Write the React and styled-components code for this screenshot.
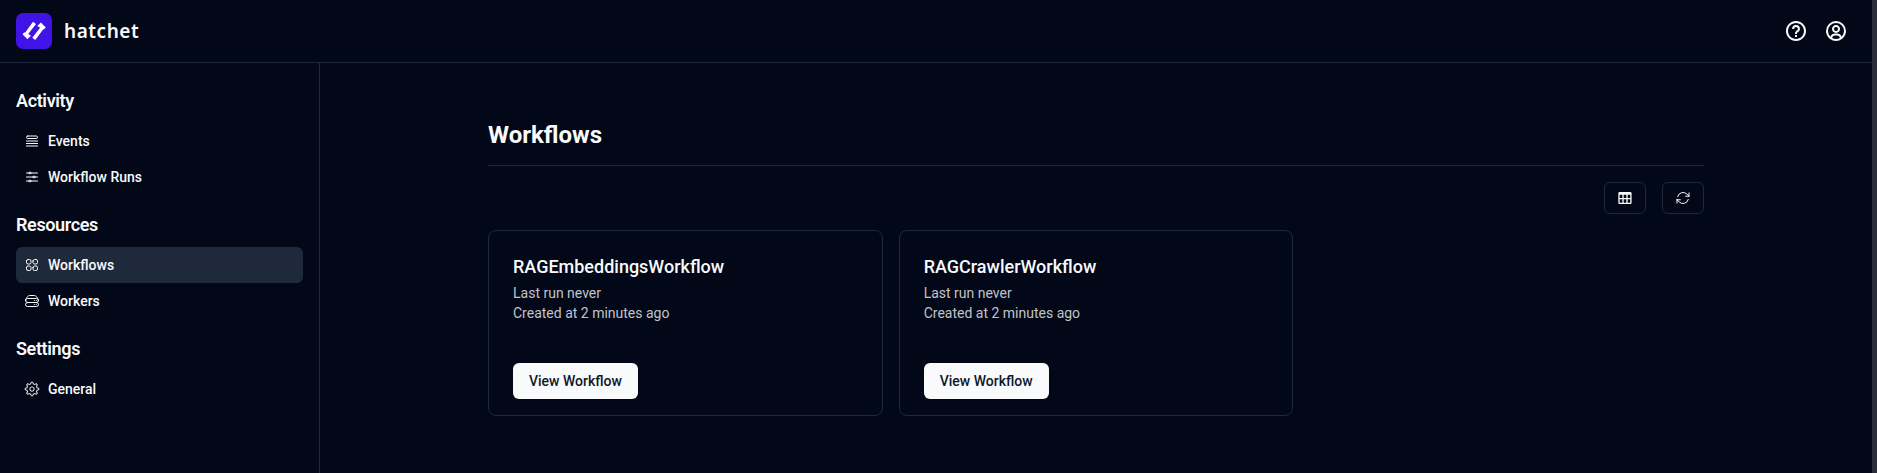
import React from "react";
import styled, { createGlobalStyle } from "styled-components";
import { BiHelpCircle, BiUserCircle, BiTable } from "react-icons/bi";
import {
  HiOutlineQueueList,
  HiOutlineAdjustmentsHorizontal,
  HiOutlineSquares2X2,
  HiOutlineServerStack,
  HiOutlineArrowPath,
} from "react-icons/hi2";
import { RxGear } from "react-icons/rx";

const GlobalStyle = createGlobalStyle`
  *, *::before, *::after { box-sizing: border-box; }
  body {
    margin: 0;
    background: #020817;
    color: #f8fafc;
    font-family: Roboto, "Liberation Sans", sans-serif;
    overflow: hidden;
  }
  h1, h2, h3, p { margin: 0; }
`;

const Shell = styled.div`
  display: flex;
  height: 100vh;
`;

const Page = styled.div`
  flex: 1;
  display: flex;
  flex-direction: column;
`;

const ScrollTrack = styled.div`
  width: 5px;
  background: #2c2d39;
`;

const Header = styled.header`
  display: flex;
  align-items: center;
  justify-content: space-between;
  height: 63px;
  padding: 0 24px 0 16px;
  border-bottom: 1px solid #1e293b;
`;

const Brand = styled.div`
  display: flex;
  align-items: center;
  gap: 12px;
`;

const Wordmark = styled.span`
  font: 650 19px/28px "Noto Sans", sans-serif;
  letter-spacing: 0.55px;
`;

const HeaderActions = styled.div`
  display: flex;
  gap: 16px;
  align-items: center;
`;

const HeaderButton = styled.button`
  display: flex;
  padding: 0;
  width: 24px;
  height: 24px;
  border: 0;
  background: none;
  color: inherit;
`;

const Body = styled.div`
  flex: 1;
  display: flex;
`;

const Sidebar = styled.aside`
  width: 320px;
  padding: 24px 16px;
  border-right: 1px solid #1e293b;
  display: flex;
  flex-direction: column;
  gap: 16px;
`;

const SectionTitle = styled.h2`
  font-size: 18px;
  line-height: 28px;
  font-weight: 600;
  letter-spacing: -0.37px;
  margin-bottom: 8px;
`;

const NavItem = styled.a`
  display: flex;
  align-items: center;
  gap: 8px;
  height: 36px;
  padding: 0 8px;
  border-radius: 6px;
  font-size: 14px;
  line-height: 20px;
  font-weight: 500;
  background: ${(p) => (p.$active ? "#1e293b" : "transparent")};
`;

const Main = styled.main`
  flex: 1;
  padding: 56px 136px 0 168px;
`;

const Content = styled.div`
  width: 1216px;
`;

const Title = styled.h1`
  font-size: 24px;
  line-height: 32px;
  font-weight: 700;
`;

const Divider = styled.div`
  height: 1px;
  background: #1e293b;
  margin: 14px 0 16px;
`;

const Toolbar = styled.div`
  display: flex;
  justify-content: flex-end;
  gap: 16px;
  margin-bottom: 16px;
`;

const ToolButton = styled.button`
  display: flex;
  align-items: center;
  justify-content: center;
  width: 42px;
  height: 32px;
  padding: 0;
  border: 1px solid #1e293b;
  border-radius: 6px;
  background: none;
  color: inherit;
`;

const CardGrid = styled.div`
  display: grid;
  grid-template-columns: repeat(3, 1fr);
  gap: 16px;
`;

const Card = styled.article`
  height: 186px;
  padding: 24px;
  border: 1px solid #1e293b;
  border-radius: 8px;
  display: flex;
  flex-direction: column;
  align-items: flex-start;
`;

const CardTitle = styled.h3`
  font-size: 18px;
  line-height: 24px;
  font-weight: 500;
  margin-bottom: 4px;
`;

const CardText = styled.p`
  font-size: 14px;
  line-height: 20px;
  color: #c0c3cb;
`;

const PrimaryButton = styled.button`
  height: 36px;
  margin-top: 40px;
  padding: 0 16px;
  border: 0;
  border-radius: 6px;
  background: #f8fafc;
  color: #0f172a;
  font: 500 14px/20px Roboto, sans-serif;
  flex: none;
`;

const Logo = () => (
  <svg width="36" height="36" viewBox="0 0 36 36">
    <rect width="36" height="36" rx="7" fill="#4013e6" />
    <g fill="#fff">
      <path d="M17 8.8 20 11.1 12.2 21.1 15 22.7 11.4 26.3 6.5 21.3 8.2 19.6 9.2 19.4Z" />
      <path d="M19.3 27 16.3 24.7 24.1 14.7 21.3 13.1 24.9 9.5 29.8 14.5 28.1 16.2 27.1 16.4Z" />
    </g>
  </svg>
);

const sections = [
  {
    title: "Activity",
    items: [
      { label: "Events", icon: HiOutlineQueueList },
      { label: "Workflow Runs", icon: HiOutlineAdjustmentsHorizontal },
    ],
  },
  {
    title: "Resources",
    items: [
      { label: "Workflows", icon: HiOutlineSquares2X2, active: true },
      { label: "Workers", icon: HiOutlineServerStack },
    ],
  },
  { title: "Settings", items: [{ label: "General", icon: RxGear }] },
];

const workflows = ["RAGEmbeddingsWorkflow", "RAGCrawlerWorkflow"];

export default function App() {
  return (
    <Shell>
      <GlobalStyle />
      <Page>
        <Header>
          <Brand>
            <Logo />
            <Wordmark>hatchet</Wordmark>
          </Brand>
          <HeaderActions>
            <HeaderButton aria-label="Help"><BiHelpCircle size={24} /></HeaderButton>
            <HeaderButton aria-label="Account"><BiUserCircle size={24} /></HeaderButton>
          </HeaderActions>
        </Header>
        <Body>
          <Sidebar>
            {sections.map((s) => (
              <nav key={s.title}>
                <SectionTitle>{s.title}</SectionTitle>
                {s.items.map(({ label, icon: Icon, active }) => (
                  <NavItem key={label} $active={active}>
                    <Icon size={16} />
                    {label}
                  </NavItem>
                ))}
              </nav>
            ))}
          </Sidebar>
          <Main>
            <Content>
              <Title>Workflows</Title>
              <Divider />
              <Toolbar>
                <ToolButton aria-label="Table view"><BiTable size={16} /></ToolButton>
                <ToolButton aria-label="Refresh"><HiOutlineArrowPath size={16} /></ToolButton>
              </Toolbar>
              <CardGrid>
                {workflows.map((name) => (
                  <Card key={name}>
                    <CardTitle>{name}</CardTitle>
                    <CardText>Last run never</CardText>
                    <CardText>Created at 2 minutes ago</CardText>
                    <PrimaryButton>View Workflow</PrimaryButton>
                  </Card>
                ))}
              </CardGrid>
            </Content>
          </Main>
        </Body>
      </Page>
      <ScrollTrack />
    </Shell>
  );
}
